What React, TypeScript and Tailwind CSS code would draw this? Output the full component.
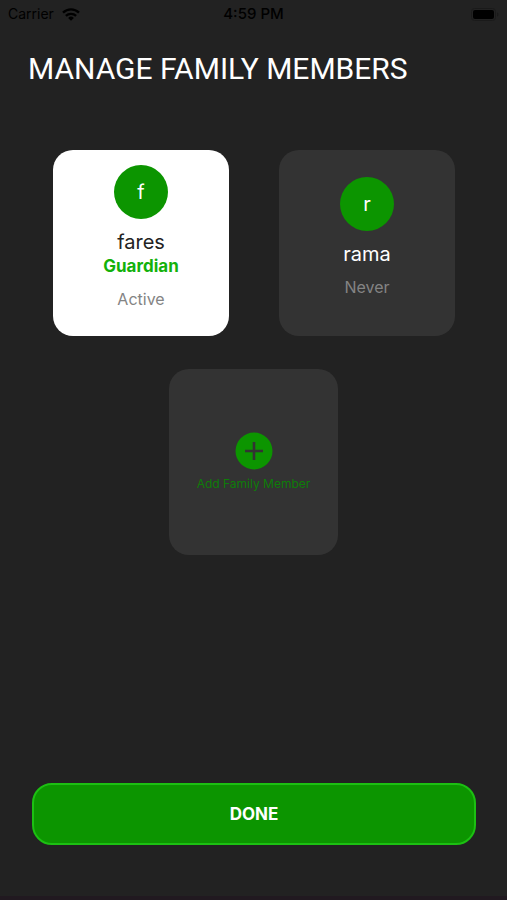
import React from "react";

type Member = {
  name: string;
  role?: string;
  status: string;
  selected?: boolean;
};

const members: Member[] = [
  { name: "fares", role: "Guardian", status: "Active", selected: true },
  { name: "rama", status: "Never" },
];

function StatusBar() {
  return (
    <div className="grid h-7 grid-cols-3 items-center px-2 text-black">
      <div className="flex items-center gap-2 text-sm">
        <span>Carrier</span>
        <svg viewBox="0 0 18 13" className="h-[13px] w-[18px]" fill="none" stroke="currentColor" strokeWidth="2.4" aria-label="Wi-Fi">
          <path d="M1 4.6a11.6 11.6 0 0 1 16 0" />
          <path d="M3.9 7.9a7.4 7.4 0 0 1 10.2 0" />
          <path d="M9 12.8 6.1 9.9a4.2 4.2 0 0 1 5.8 0Z" fill="currentColor" stroke="none" />
        </svg>
      </div>
      <span className="text-center text-[15px] leading-5 font-medium">4:59 PM</span>
      <svg viewBox="0 0 28 13" className="h-[13px] w-7 justify-self-end" aria-label="Battery full">
        <rect x="0.5" y="0.5" width="24" height="12" rx="3" fill="none" stroke="#1a1a1a" />
        <rect x="2" y="2" width="21" height="9" rx="2" fill="#000" />
        <path d="M26 4.5v4c1-.4 1.5-1.1 1.5-2s-.5-1.6-1.5-2Z" fill="#1a1a1a" />
      </svg>
    </div>
  );
}

function MemberCard({ name, role, status, selected }: Member) {
  return (
    <button
      type="button"
      aria-pressed={!!selected}
      className={`flex h-[186px] flex-col items-center justify-center rounded-[20px] pb-2.5 ${
        selected ? "bg-white text-[#222222]" : "bg-[#333333] text-white"
      }`}
    >
      <span className="mb-[11px] flex size-[54px] items-center justify-center rounded-full bg-[#0c9500] text-xl text-white">
        {name[0]}
      </span>
      <span className="text-xl leading-6">{name}</span>
      {role && <span className="text-[17px] leading-6 font-bold text-[#13b10a]">{role}</span>}
      <span className="mt-[9px] text-base leading-6 text-[#848484]">{status}</span>
    </button>
  );
}

export default function App() {
  return (
    <div className="flex min-h-screen flex-col border-b-4 border-[#211920] bg-[#222222] font-['Inter',sans-serif]">
      <StatusBar />
      <h1 className="mt-[21px] px-7 font-['Roboto',sans-serif] text-[30px] leading-10 text-white">
        MANAGE FAMILY MEMBERS
      </h1>
      <main className="mt-[61px] flex flex-1 flex-col items-center gap-[33px]">
        <div className="grid w-full grid-cols-2 gap-[50px] pr-[52px] pl-[53px]">
          {members.map((m) => (
            <MemberCard key={m.name} {...m} />
          ))}
        </div>
        <button
          type="button"
          className="flex h-[186px] w-[169px] flex-col items-center justify-center gap-1 rounded-[20px] bg-[#333333] pt-0.5 text-xs leading-5 text-[#0e7d08]"
        >
          <svg viewBox="0 0 38 38" className="size-[38px]" aria-hidden="true">
            <circle cx="19" cy="19" r="18.5" fill="#0c9500" />
            <path d="M19 10v18M10 19h18" stroke="#333333" strokeWidth="2.6" />
          </svg>
          Add Family Member
        </button>
      </main>
      <footer className="pr-[31px] pb-[51px] pl-8">
        <button
          type="button"
          className="h-[62px] w-full rounded-[20px] border-2 border-[#1cc012] bg-[#0c9500] text-[17px] leading-6 font-bold text-white"
        >
          DONE
        </button>
      </footer>
    </div>
  );
}
